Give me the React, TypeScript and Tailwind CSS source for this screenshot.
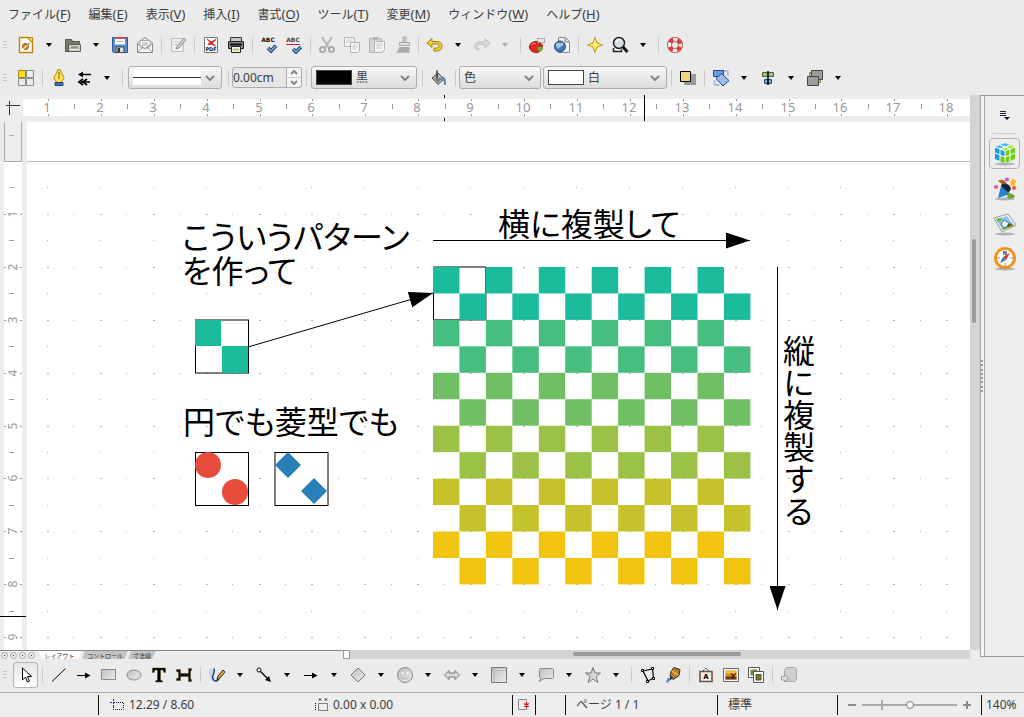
import { Fragment } from "react";
import type { ReactNode } from "react";

// one centimetre on the page at 140% zoom
const CM = 52.9;
const cm = (n: number) => Math.round(n * CM);

const range = (from: number, to: number) =>
  Array.from({ length: to - from + 1 }, (_, i) => from + i);

const menus = [
  ["ファイル", "F"],
  ["編集", "E"],
  ["表示", "V"],
  ["挿入", "I"],
  ["書式", "O"],
  ["ツール", "T"],
  ["変更", "M"],
  ["ウィンドウ", "W"],
  ["ヘルプ", "H"],
];

const bands = ["#1abc9c", "#45be80", "#70bf64", "#9bc147", "#c6c22b", "#f1c40f"];

const icons: Record<string, ReactNode> = {
  new: (
    <>
      <path d="M2.500 1.500h8l5 5v10h-13z" fill="#fffdf2" stroke="#b8860b" strokeWidth="1.400" />
      <path d="M10.500 1.500h5v5z" fill="#f3d36a" stroke="#b8860b" />
      <circle cx="8.500" cy="10.500" r="3" fill="#e07b28" stroke="#8a4a20" />
      <path d="m5.500 13.500 7-6" stroke="#fff3d0" strokeWidth="1.200" />
      <path d="m10 9.500 3-3" stroke="#555" />
    </>
  ),
  open: (
    <>
      <path d="M1.500 3.500h6l1 2h7v10h-14z" fill="#77796b" stroke="#55574d" />
      <path d="M4.500 8.500h12v7h-12z" fill="#c9cbc4" stroke="#5d5f56" />
      <path d="M7 11.500h7" stroke="#8a8c84" strokeWidth="2" />
      <path d="M7 13.500h7" stroke="#f2f2ef" />
    </>
  ),
  save: (
    <>
      <path d="M1.500 1.500h15v15h-14l-1-1z" fill="#5b8fd0" stroke="#2b5796" />
      <path d="M4 1.500h10v7H4z" fill="#fff" />
      <path d="M4 1h10v2H4z" fill="#d94a44" />
      <path d="M5.500 5.500h7" stroke="#bbb" />
      <path d="M5 11h8v5.500H5z" fill="#ddd" stroke="#444" />
      <path d="M6.500 12h2.500v4H6.500z" fill="#333" />
    </>
  ),
  mail: (
    <>
      <path d="M1.500 7 9 1.500 16.500 7v9.500h-15z" fill="#f5f5f5" stroke="#888" />
      <path d="M4 4.500h10v6L9 13 4 10.500z" fill="#fff" stroke="#aaa" />
      <path d="M2 16l5-5M16 16l-5-5M2 8l7 4.500L16 8M6 7h6M6 9h6" fill="none" stroke="#999" />
    </>
  ),
  edit: (
    <>
      <path d="M2.500 2.500h12v13h-12z" fill="#f0f0f0" stroke="#bbb" />
      <path d="M4.500 6h6M4.500 8.500h4" stroke="#ccc" />
      <path d="m7 13 1-3 7-8 2 2-7 8z" fill="#c9c9c9" stroke="#999" />
    </>
  ),
  pdf: (
    <>
      <path d="M2.500 1.500h13v15h-13z" fill="#fff" stroke="#777" />
      <path d="m5 3 4 3 5-2.500-4 3.500 3.500 3L9 8l-3 .500 2-2z" fill="#d9202a" stroke="#d9202a" />
      <text x="9" y="15" textAnchor="middle" fontSize="5" fontWeight="700" fill="#111">PDF</text>
    </>
  ),
  print: (
    <>
      <path d="M3.500 1.500h11v5h-11z" fill="#c8c8c8" stroke="#333" />
      <path d="M1.500 5.500h15v7h-15z" fill="#8a8a8a" stroke="#222" />
      <path d="M3 8.500h12" stroke="#111" strokeWidth="2" />
      <path d="M4.500 10.500h9v6h-9z" fill="#f4f4ee" stroke="#222" />
      <path d="M6 13.500h6" stroke="#a9c878" strokeWidth="2" />
    </>
  ),
  spell: (
    <>
      <text x="8" y="6" textAnchor="middle" fontSize="6" fontWeight="700" fill="#111">ABC</text>
      <path d="m8 12 3 3 5-5.500" fill="none" stroke="#1d4278" strokeWidth="3.500" />
      <path d="m8 12 3 3 5-5.500" fill="none" stroke="#7ea9de" strokeWidth="1.500" />
    </>
  ),
  autospell: (
    <>
      <text x="8" y="6" textAnchor="middle" fontSize="6" fontWeight="700" fill="#5a4040">ABC</text>
      <path d="m1 9 1-1 1 1 1-1 1 1 1-1 1 1 1-1 1 1 1-1 1 1 1-1 1 1 1-1 1 1" fill="none" stroke="#e02020" />
      <path d="m8 13 3 3 5-5" fill="none" stroke="#1d4278" strokeWidth="3.500" />
      <path d="m8 13 3 3 5-5" fill="none" stroke="#7ea9de" strokeWidth="1.500" />
    </>
  ),
  cut: (
    <>
      <path d="m4 1 7 11M14 1 7 12" stroke="#b5b5b5" strokeWidth="2" />
      <circle cx="4.500" cy="13.500" r="2.500" fill="none" stroke="#aaa" strokeWidth="2" />
      <circle cx="13.500" cy="13.500" r="2.500" fill="none" stroke="#aaa" strokeWidth="2" />
    </>
  ),
  copy: (
    <>
      <path d="M1.500 1.500h10v9h-10z" fill="#f3f3f3" stroke="#b5b5b5" />
      <path d="M3.500 4h6M3.500 6h6" stroke="#ccc" />
      <path d="M7.500 6.500h9v8l-2 2h-7z" fill="#f5f5f5" stroke="#b0b0b0" />
      <path d="M9.500 9h5M9.500 11h5M9.500 13h4" stroke="#ccc" />
    </>
  ),
  paste: (
    <>
      <path d="M1.500 2.500h12v14h-12z" fill="#d5d5d5" stroke="#b0b0b0" />
      <path d="M5 1h5v3H5z" fill="#b5b5b5" />
      <path d="M6.500 5.500h10v8l-2 3h-8z" fill="#f3f3f3" stroke="#b5b5b5" />
      <path d="M8.500 8h6M8.500 10h6M8.500 12h5" stroke="#ccc" />
    </>
  ),
  brush: (
    <>
      <path d="M10 1h3v5h-3z" fill="#ccc" stroke="#aaa" />
      <path d="M6.500 6.500h10v3h-10z" fill="#ddd" stroke="#aaa" />
      <path d="M6.500 11h10v5H4z" fill="#aaa" />
      <path d="M3 16.500h14" stroke="#bbb" />
    </>
  ),
  undo: (
    <path d="M1 7l5-4.500v3h5c3 0 5 1.500 5 4.500 0 3-2 5-5 5H8v-3h3c1 0 2-.5 2-2s-1-2-2-2H6v3.500z" fill="#f0cf3c" stroke="#a88400" />
  ),
  redo: (
    <path d="M17 7l-5-4v3H6C3.500 6 1.500 7.500 1.500 10s1.500 4 4 4v-1.500c-1 0-1.500-1-1.500-2s1-2 2-2h6V12z" fill="#ddd" stroke="#bbb" />
  ),
  chart: (
    <>
      <ellipse cx="8" cy="11" rx="6.500" ry="5.500" fill="#dd2a22" stroke="#a31712" />
      <path d="M9 11h6c0 3-2 4.500-4 5z" fill="#6fa833" />
      <path d="M4 9c1-2 3-2 4-1" stroke="#f79b92" fill="none" />
      <path d="M9.500 2.500h7v4h-7z" fill="#e8e8e8" stroke="#888" strokeDasharray="2 1" />
    </>
  ),
  globe: (
    <>
      <path d="M5.500 1.500h7l4 4v11h-11z" fill="#f5f5f5" stroke="#888" />
      <path d="M12 1.500V6h4.500" fill="#ddd" stroke="#888" />
      <circle cx="7" cy="10.500" r="5.500" fill="#4576b5" stroke="#274f8a" />
      <path d="M3 8c2-3 4 0 5-1s3 0 2 2-3 1-4 3-3-1-3-4z" fill="#a9c6ea" />
    </>
  ),
  navigator: (
    <path d="M9 1.500 11 7l5.500 2-5.500 2-2 5.500L7 11 1.500 9 7 7z" fill="#ffee7a" stroke="#c49a00" />
  ),
  zoom: (
    <>
      <path d="M2.500 12v3.500h8v-2" fill="#f4f4f4" stroke="#222" strokeWidth="1.500" />
      <circle cx="8" cy="7" r="5.500" fill="#d6dde0" stroke="#222" strokeWidth="1.500" />
      <path d="M5 6c1-2 3-3 5-2" stroke="#fff" strokeWidth="1.500" />
      <path d="m12 11 4.500 5" stroke="#111" strokeWidth="3" />
    </>
  ),
  help: (
    <>
      <circle cx="9" cy="9" r="5.500" fill="none" stroke="#a8453f" strokeWidth="5" />
      <circle cx="9" cy="9" r="5.500" fill="none" stroke="#f3eeee" strokeWidth="3.500" />
      <circle cx="9" cy="9" r="5.500" fill="none" stroke="#e23a35" strokeWidth="4" strokeDasharray="4.320 4.320" strokeDashoffset="-2" />
    </>
  ),
  styles: (
    <>
      <path d="M1.500 1.500h7v7h-7z" fill="#ffd91c" stroke="#9a8420" />
      <path d="M9.500 1.500h7v7h-7zM1.500 9.500h7v7h-7zM9.500 9.500h7v7h-7z" fill="#ececec" stroke="#8a8a8a" />
    </>
  ),
  pen: (
    <>
      <path d="M8 .5h2c1 4 4 6 4 9l-3 4H7l-3-4c0-3 3-5 4-9z" fill="#ffe14d" stroke="#a88400" />
      <path d="M9 3v7" stroke="#7a6000" />
      <path d="M5 13.500h8v3H5z" fill="#3e6db3" stroke="#24487e" />
    </>
  ),
  lineEnds: (
    <>
      <path d="M5 5.500h11M6 13h9" stroke="#000" strokeWidth="1.500" />
      <path d="m3 5.500 5-3v6z" fill="#000" />
      <path d="m8 10-4 3 4 3M12 10l-4 3 4 3" fill="none" stroke="#000" strokeWidth="1.700" />
    </>
  ),
  bucket: (
    <>
      <path d="m2 9 6-5 6 6-6 5.500z" fill="#b9b9b5" stroke="#4a4a46" />
      <path d="M7 1.500v8" stroke="#333" strokeWidth="1.500" />
      <path d="M4 9h8l-4 5z" fill="#7c7c78" />
      <path d="M11 8c4-1 5 1 5 8h-2c0-5-1-6-3-5z" fill="#6487b5" />
    </>
  ),
  shadow: (
    <>
      <path d="M5 5h12v11H5z" fill="#999" />
      <path d="M1.500 2.500h10v10h-10z" fill="#f3d67c" stroke="#000" />
    </>
  ),
  rotate: (
    <>
      <path d="M2.500 16v-5M2.500 16h5M16 2v5M16 2h-5" stroke="#9db8dc" strokeWidth="1.500" />
      <path d="M1.500 1.500h10v6h-10z" fill="#6f9bd6" stroke="#1f4b8e" />
      <path d="m4 9.500 5.500-5 7.500 7-6 5.500z" fill="#9dbde8" stroke="#1f4b8e" />
    </>
  ),
  align: (
    <>
      <path d="M3.500 3.500h11v4h-11z" fill="#9fc08b" stroke="#4a6d37" />
      <path d="M5.500 10.500h7v4h-7z" fill="#7ba0ce" stroke="#2c517f" />
      <path d="M9 2v14" stroke="#000" strokeWidth="1.500" />
    </>
  ),
  arrange: (
    <>
      <path d="M3.500 3.500h11v10h-11z" fill="#b5d780" stroke="#6b9336" />
      <path d="M5.500 1.500h11v9h-11z" fill="#9c9c9c" stroke="#444" />
      <path d="M1.500 7.500h11v9h-11z" fill="#9c9c9c" stroke="#444" />
    </>
  ),
  select: <path d="M5.500 2v12l3-3 2 5 2-1-2-4.500h4z" fill="#fff" stroke="#000" />,
  line: <path d="M2 15.500 15.500 2.500" stroke="#000" />,
  arrow: (
    <>
      <path d="M2 9.500h10" stroke="#000" />
      <path d="M10 6.500v6l5.500-3z" fill="#000" />
    </>
  ),
  rect: <path d="M1.500 3.500h14v10h-14z" fill="url(#metal)" stroke="#888" />,
  ellipse: <ellipse cx="9" cy="9" rx="7" ry="5" fill="url(#metal)" stroke="#888" />,
  text: <path d="M2.500 2h13v4.500H14L13 4h-2.500v10l2 1v1h-7v-1l2-1V4H5L4 6.500H2.500z" fill="#000" stroke="#5c481c" strokeWidth=".5" />,
  dimension: <path d="M1.500 3.500v2l2 .5v6l-2 .5v2h4V10.500h8v5h3v-2l-1-.5V5l1-.5v-2h-3v5h-8v-4z" fill="#111" stroke="#5c481c" strokeWidth=".5" />,
  curve: (
    <>
      <path d="M1.500 2.500C8 2 3 8 5 12l3 3C3 17 1 12 1.500 2.500z" fill="#bcd0ea" />
      <path d="M6 2.500C8 8 3 9 5 13s6 1 6-1" stroke="#1f3f6e" strokeWidth="1.500" />
      <path d="m9 14 1-4 5-6 2 2-5 6z" fill="#f0a92c" stroke="#222" />
    </>
  ),
  connector: (
    <>
      <circle cx="4" cy="4" r="2" fill="#fff" stroke="#000" />
      <path d="m5.500 5.500 7 7" stroke="#000" strokeWidth="1.200" />
      <path d="m10 14 6 2-2-6z" fill="#000" />
    </>
  ),
  diamond: <path d="m9 2 7 7-7 7-7-7z" fill="url(#metal)" stroke="#777" />,
  smiley: (
    <>
      <circle cx="9" cy="9" r="7.500" fill="url(#metal)" stroke="#888" />
      <path d="M6.500 6v2M11.500 6v2" stroke="#fff" strokeWidth="1.500" />
      <path d="M5 11c2 2.500 6 2.500 8 0" fill="none" stroke="#aaa" />
    </>
  ),
  doubleArrow: <path d="m1.500 9 4.500-4.500V7h6V4.500L16.500 9 12 13.500V11H6v2.500z" fill="#d9d9d9" stroke="#777" />,
  flowchart: (
    <>
      <path d="M1.500 1.500h15v15h-15z" fill="url(#metal)" stroke="#777" />
      <path d="M4.500 2v14M2 4.500h14" stroke="#bdbdbd" />
    </>
  ),
  callout: <path d="M3.500 2.500h12l1 1v8l-1 1h-8L2 15.500l2-3-1.500-1v-8z" fill="url(#metal)" stroke="#888" />,
  star: <path d="m9 1.500 2 5.500h5.500L12 10.500l2 6L9 13l-5 3.500 2-6L1.500 7H7z" fill="url(#metal)" stroke="#777" />,
  points: (
    <>
      <path d="M4 5 13.500 3 14.500 12 9 15z" fill="none" stroke="#000" strokeWidth="1.200" />
      <path d="M2.500 3.500h2v2h-2zM12.500 1.500h2v2h-2zM13.500 11.500h2v2h-2zM7.500 14.500h2v2h-2z" fill="#fff" stroke="#000" />
    </>
  ),
  glue: (
    <>
      <path d="m10 1.500 6 2-1 6-6 4-3-3 1-5z" fill="#b07a3a" stroke="#3a2814" />
      <path d="m8 5 6 4" stroke="#e8b53a" strokeWidth="2" />
      <path d="m7 10 2 2-4 3z" fill="#222" />
      <path d="m5 12-2 4.500" stroke="#5580b8" strokeWidth="2" />
    </>
  ),
  fontwork: (
    <>
      <path d="m6 5 3-3 3 3" fill="none" stroke="#111" strokeDasharray="1.500 1" />
      <path d="M3 5.500h12v10H3z" fill="#f5efe8" stroke="#6b5343" strokeWidth="1.600" />
      <text x="9" y="13" textAnchor="middle" fontSize="7" fontWeight="700" fill="#000">A</text>
    </>
  ),
  picture: (
    <>
      <path d="M1.500 2.500h15v13h-15z" fill="#fff" stroke="#666" />
      <path d="M3.500 4.500h11v9h-11z" fill="#d58722" />
      <path d="M3.500 4.500h11v3h-11z" fill="#f0bd4a" />
      <path d="M3.500 10.500h11v3h-11z" fill="#6b3a12" />
      <path d="M11 13V8m0 3 3-4m-3 3L9 7" stroke="#2d1a0a" />
    </>
  ),
  gallery: (
    <>
      <path d="M1.500 1.500h11v10h-11z" fill="#fff" stroke="#555" />
      <path d="M3.500 3.500h7v6h-7z" fill="#6d8e3e" />
      <path d="M6.500 5.500h10v11h-10z" fill="#fff" stroke="#555" />
      <path d="M9 8.500h5V14H9z" fill="#8b6a2c" stroke="#37592b" />
    </>
  ),
  extrude: (
    <>
      <path d="M5.500 2.500 7 1.500h8l1.500 1.500v10L15 15.500H4.500v-11z" fill="#cfcfcf" stroke="#aaa" />
      <path d="M1.500 10.500h3v-2l4 3.500-4 4v-2h-3z" fill="#e2e2e2" stroke="#999" />
    </>
  ),
};

function Icon({ name }: { name: string }) {
  return (
    <svg viewBox="0 0 18 18" className="h-[18px] w-[18px] font-['DejaVu_Sans']" fill="none">
      {icons[name]}
    </svg>
  );
}

function Tool({ name, menu = false, active = false, off = false }: { name: string; menu?: boolean; active?: boolean; off?: boolean }) {
  return (
    <>
      <button
        aria-label={name}
        disabled={off}
        className={
          active
            ? "flex h-[26px] w-[25px] shrink-0 items-center justify-center rounded-[3px] border border-[#b4b4b4] bg-linear-to-b from-[#e4e4e4] to-white"
            : "flex h-[26px] w-[25px] shrink-0 items-center justify-center"
        }
      >
        <Icon name={name} />
      </button>
      {menu && (
        <button aria-label={`${name} menu`} disabled={off} className="flex h-[26px] w-[22px] shrink-0 items-center justify-center">
          <svg viewBox="0 0 6 4" className="h-1 w-1.5">
            <path d="M0 0h6L3 4z" fill={off ? "#aaa" : "#000"} />
          </svg>
        </button>
      )}
    </>
  );
}

function Sep() {
  return (
    <div className="flex w-2 shrink-0 justify-center">
      <div className="h-4 w-px bg-[#cacaca]" />
    </div>
  );
}

function Grip() {
  return (
    <div className="flex w-[13px] shrink-0 flex-col gap-0.5 pl-[3px]">
      <div className="h-px w-1 bg-[#c4c4c4]" />
      <div className="h-px w-1 bg-[#c4c4c4]" />
      <div className="h-px w-1 bg-[#c4c4c4]" />
    </div>
  );
}

function Combo({ label, value, width, swatch }: { label: string; value: string; width: string; swatch?: ReactNode }) {
  return (
    <label className={`flex h-[23px] shrink-0 items-center rounded-[3px] border border-[#adadad] bg-linear-to-b from-[#f7f7f7] to-[#dcdcdc] pr-1.5 pl-1 ${width}`}>
      {swatch}
      <select aria-label={label} className="min-w-0 flex-1 appearance-none outline-none">
        <option>{value}</option>
      </select>
      <svg viewBox="0 0 10 6" className="h-1.5 w-2.5 shrink-0">
        <path d="m1 1 4 4 4-4" fill="none" stroke="#858585" strokeWidth="2" />
      </svg>
    </label>
  );
}

function HorizontalRuler() {
  return (
    <svg className="h-[27px] w-full font-['Noto_Sans'] text-[13px]" shapeRendering="crispEdges">
      <rect x="23" y="4" width="100%" height="17" fill="#fff" />
      {range(1, 18).map((n) => (
        <g key={n} stroke="#999">
          <path d={`M${cm(n) - 5} 4v2M${cm(n) - 5} 19v2M${cm(n + 0.5) - 5} 9v5`} />
          <text x={cm(n) - 6} y="17" textAnchor="middle" fill="#999" stroke="none">{n}</text>
        </g>
      ))}
      <path d="M9.500 6v14M6 10.500h14" stroke="#333" />
      <path d="M444.500 0v3M444.500 23v3M644.500 0v26" stroke="#000" />
    </svg>
  );
}

function VerticalRuler() {
  return (
    <svg className="w-[27px] shrink-0 self-stretch font-['Noto_Sans'] text-[12px]" shapeRendering="crispEdges">
      <rect x="4" y="40" width="18" height="100%" fill="#fff" />
      <path d="M4.500 0v39.500h17V0M9 13.500h5M9 65.500h5" fill="none" stroke="#aaa" />
      {range(1, 9).map((n) => (
        <g key={n} stroke="#999">
          <path d={`M4 ${cm(n) + 39}h2M20 ${cm(n) + 39}h2M9 ${cm(n + 0.5) + 39}h5`} />
          <text transform={`translate(17 ${cm(n) + 39}) rotate(-90)`} textAnchor="middle" fill="#999" stroke="none">{n}</text>
        </g>
      ))}
      <path d="M0 494.500h26" stroke="#000" />
    </svg>
  );
}

function Drawing() {
  const half = CM / 2;
  return (
    <svg className="min-w-0 flex-1 self-stretch bg-white font-['Noto_Sans_CJK_JP',sans-serif] text-[32px] [font-feature-settings:'palt']">
      <defs>
        <marker id="head" viewBox="0 0 24 16" refX="24" refY="8" markerWidth="24" markerHeight="16" markerUnits="userSpaceOnUse" orient="auto">
          <path d="M0 0 24 8 0 16z" />
        </marker>
      </defs>
      <path d="M0 39.500h4000" stroke="#bbb" />
      <g transform="translate(-32 39)">
        {/* snap grid */}
        <g stroke="#b5b5b5" shapeRendering="crispEdges" transform="translate(-1 0)">
          {range(1, 40).map((r) => (
            <Fragment key={r}>
              <path d={range(1, 40).map((c) => `M${cm(c)} ${cm(r - 0.5)}h1`).join("")} />
              <path d={range(1, 40).map((c) => `M${cm(c)} ${cm(r)}h2M${cm(c + 0.5)} ${cm(r)}h1`).join("")} />
            </Fragment>
          ))}
        </g>

        {/* 12 x 12 checkerboard, two rows for every colour */}
        <g transform="translate(438 106)">
          <path d={`M.5 0v${CM}H${CM}V0H.5z`} fill="#fff" stroke="#000" />
          {range(0, 11).map((row) =>
            range(0, 5).map((col) => (
              <rect
                key={`${row}-${col}`}
                x={(col * 2 + (row % 2)) * half}
                y={row * half}
                width={half}
                height={half}
                fill={bands[Math.floor(row / 2)]}
              />
            ))
          )}
        </g>

        <g stroke="#000" fill="#fff">
          <rect x="200.500" y="159" width="53" height="53" />
          <rect x="200.500" y="291.500" width="53" height="53" />
          <rect x="280" y="291.500" width="53" height="53" />
        </g>
        <path d="M200 159h26v26h-26zM227 185h26v27h-26z" fill="#1abc9c" />
        <g fill="#e74c3c">
          <circle cx="213" cy="304" r="13" />
          <circle cx="240" cy="331" r="13" />
        </g>
        <path d="m293 291 13 13-13 13-13-13zM319 317l13 13-13 13-13-13z" fill="#2980b9" />

        <g stroke="#000">
          <path d="M438 79.500h317" markerEnd="url(#head)" />
          <path d="M253 186 438 132" markerEnd="url(#head)" />
          <path d="M782.500 106v343" markerEnd="url(#head)" />
        </g>

        <text x="187" y="88">こういうパターン</text>
        <text x="187" y="122">を作って</text>
        <text x="188" y="273">円でも菱型でも</text>
        <text x="503" y="75">横に複製して</text>
        <text x="804" y="174" className="[font-feature-settings:normal] [writing-mode:vertical-rl]">縦に複製する</text>
      </g>
    </svg>
  );
}

const decks: { name: string; art: ReactNode }[] = [
  {
    name: "プロパティ",
    art: (
      <>
        <path d="m2 5 10 4v12L2 17z" fill="#159be8" />
        <path d="M12 9l10-4v12l-10 4z" fill="#6fce12" />
        <path d="m2 5 10-4 5 2-10 4z" fill="#49b8f2" />
        <path d="m7 7 10-4 5 2-10 4z" fill="#a2ec3c" />
        <path d="m7 13 5 2v6l-5-2z" fill="#6fce12" />
        <path d="m2 5 10 4 10-4M12 9v12M7 3l10 4v12M17 3 7 7v12M2 11l10 4 10-4" fill="none" stroke="#fff" />
      </>
    ),
  },
  {
    name: "スタイル",
    art: (
      <>
        <path d="M5 4c5-3 8 0 9 4l3 6-7-4-2-4z" fill="#b45a1a" />
        <path d="M8 8c6-3 9 0 10 4l-4 6-5-4z" fill="#16273d" />
        <path d="m8 9 9 8-12 4z" fill="#2a82c9" />
        <path d="M16 14c-1 3 5 2 6 6-4 2-7 2-8 0z" fill="#6ba32c" />
        <circle cx="14" cy="2.500" r="2" fill="#c64fd4" />
        <circle cx="3" cy="10" r="2" fill="#e4549a" />
        <circle cx="21" cy="11" r="2" fill="#ef4d55" />
        <path d="m20 0 1 3 3 1-2 2v3l-2-1-3 1 1-3-2-2h3z" fill="#f7b916" />
      </>
    ),
  },
  {
    name: "ギャラリー",
    art: (
      <>
        <path d="m1 6 14-4 8 11-14 7z" fill="#f4f4f4" stroke="#999" />
        <path d="m3 7 11-3 6 8-11 5z" fill="#8fcaf0" />
        <path d="m3 7 5-1 1 2-4 2zM8 17l12-5 1 2-11 4z" fill="#5bbf21" />
        <path d="m8 12 3-4 5 3-1 3-4 2z" fill="#fff" stroke="#2c6aa5" />
        <path d="m14 13 4-2 1 2-4 2z" fill="#7e3a12" />
      </>
    ),
  },
  {
    name: "ナビゲーター",
    art: (
      <>
        <circle cx="12" cy="11" r="9.500" fill="#fff" stroke="#f0941e" strokeWidth="3" />
        <path d="M12 4v2M12 16v3M4 11h3M17 11h3" stroke="#999" />
        <path d="m17 6-4 7-3-3z" fill="#d8322a" />
        <path d="m7 16 3-6 3 3z" fill="#2f74cc" />
        <text x="12" y="8" textAnchor="middle" fontSize="6" fontWeight="700" fill="#333">N</text>
      </>
    ),
  },
];

function Sidebar() {
  return (
    <aside className="mb-0.5 flex shrink-0 border-y border-[#999]">
      <div className="flex w-[5px] items-center border-x border-[#a5a5a5] bg-[#f4f4f4]">
        <div className="flex h-8 w-0.5 flex-col justify-between">
          {range(0, 7).map((n) => (
            <div key={n} className="h-0.5 w-0.5 bg-[#999]" />
          ))}
        </div>
      </div>
      <div className="flex w-[39px] flex-col items-center gap-1 bg-[#ededed] pt-[7px]">
        <button aria-label="設定" className="flex h-6 w-6 items-center justify-center">
          <svg viewBox="0 0 12 12" className="h-3 w-3">
            <path d="M1 2.500h6M1 4.500h6M1 6.500h6" stroke="#223" />
            <path d="M5 8h6l-3 3z" fill="#111a33" />
          </svg>
        </button>
        <hr className="mt-0.5 w-6 border-[#ccc]" />
        {decks.map((deck, i) => (
          <button
            key={deck.name}
            aria-label={deck.name}
            className={
              i === 0
                ? "flex h-[31px] w-[31px] items-center justify-center rounded-[4px] border border-[#b2b2b2]"
                : "flex h-[31px] w-[31px] items-center justify-center"
            }
          >
            <svg viewBox="0 0 24 24" className="h-6 w-6 shrink-0 font-['Liberation_Sans']">
              <ellipse cx="12" cy="22" rx="10" ry="1.500" fill="#000" opacity=".25" />
              {deck.art}
            </svg>
          </button>
        ))}
      </div>
    </aside>
  );
}

function LayerTabs() {
  return (
    <div className="flex h-[9px] font-['Noto_Sans_CJK_JP',sans-serif] text-[6px] leading-[7px] text-[#333]">
      <div className="flex w-[343px] shrink-0 border-t border-[#888] bg-[#ededed]">
        <div className="flex w-[37px] shrink-0 items-center gap-0.5 pl-px">
          {["先頭", "前", "次", "末尾"].map((name) => (
            <button key={name} aria-label={name} className="flex h-[7px] w-[7px] items-center justify-center rounded-full border border-[#aaa]">
              <span className="h-px w-px bg-[#333]" />
            </button>
          ))}
        </div>
        <button className="w-[45px] bg-white [clip-path:polygon(0_0,100%_0,92%_100%,14%_100%)]">レイアウト</button>
        <button className="w-[46px] bg-[#c4c4c4] [clip-path:polygon(6%_0,100%_0,92%_100%,0_100%)]">コントロール</button>
        <button className="w-[28px] bg-[#c4c4c4] [clip-path:polygon(12%_0,100%_0,86%_100%,0_100%)]">寸法線</button>
      </div>
      <div className="w-[7px] shrink-0 border border-[#999] bg-white" />
      <div className="flex-1 bg-[#d4d4d4] pt-0.5">
        <div className="mr-[37%] ml-auto h-1 w-[27%] rounded-full bg-[#9b9b9b]" />
      </div>
    </div>
  );
}

export default function App() {
  return (
    <div className="flex min-h-screen flex-col overflow-hidden bg-[#ebebeb] font-['Noto_Sans','Noto_Sans_CJK_JP',sans-serif] text-[12px] text-[#3c3c3c]">
      <svg className="absolute h-0 w-0">
        <defs>
          <linearGradient id="metal" x1="0" y1="0" x2="1" y2="1">
            <stop offset="0" stopColor="#bdbdbd" />
            <stop offset="1" stopColor="#ededed" />
          </linearGradient>
        </defs>
      </svg>

      <nav className="flex h-[29px] shrink-0 items-center gap-[18px] pl-2 leading-4">
        {menus.map(([name, key]) => (
          <button key={key} className="whitespace-nowrap">
            {name}
            <span className="text-[13px]">
              (<span className="underline underline-offset-2">{key}</span>)
            </span>
          </button>
        ))}
      </nav>

      {/* standard toolbar */}
      <div className="flex h-[31px] shrink-0 items-center">
        <Grip />
        <Tool name="new" menu />
        <Tool name="open" menu />
        <Tool name="save" />
        <Tool name="mail" />
        <Sep />
        <Tool name="edit" off />
        <Sep />
        <Tool name="pdf" />
        <Tool name="print" />
        <Sep />
        <Tool name="spell" />
        <Tool name="autospell" />
        <Sep />
        <Tool name="cut" off />
        <Tool name="copy" off />
        <Tool name="paste" off />
        <Tool name="brush" off />
        <Sep />
        <Tool name="undo" menu />
        <Tool name="redo" menu off />
        <Sep />
        <Tool name="chart" />
        <Tool name="globe" />
        <Sep />
        <Tool name="navigator" />
        <Tool name="zoom" menu />
        <Sep />
        <Tool name="help" />
      </div>

      {/* line and filling toolbar */}
      <div className="flex h-[35px] shrink-0 items-center">
        <Grip />
        <Tool name="styles" />
        <Sep />
        <Tool name="pen" />
        <Tool name="lineEnds" menu />
        <Sep />
        <div className="flex items-center px-0.5">
          <Combo
            label="線のスタイル"
            value=""
            width="w-[94px]"
            swatch={
              <span className="flex h-[15px] w-[68px] shrink-0 items-center bg-white">
                <span className="h-px w-full bg-[#333]" />
              </span>
            }
          />
        </div>
        <Sep />
        <div className="flex h-[21px] w-[70px] shrink-0 items-stretch">
          <input
            aria-label="線の幅"
            defaultValue="0.00cm"
            className="w-[55px] rounded-l-[3px] border border-[#adadad] bg-[#e6e6e6] outline-none"
          />
          <div className="flex flex-1 flex-col rounded-r-[3px] border border-l-0 border-[#adadad] bg-[#f5f5f5]">
            <button aria-label="増やす" className="flex flex-1 items-center justify-center border-b border-[#ccc]">
              <svg viewBox="0 0 8 5" className="h-[5px] w-2"><path d="m1 4 3-3 3 3" fill="none" stroke="#858585" strokeWidth="2" /></svg>
            </button>
            <button aria-label="減らす" className="flex flex-1 items-center justify-center">
              <svg viewBox="0 0 8 5" className="h-[5px] w-2"><path d="m1 1 3 3 3-3" fill="none" stroke="#858585" strokeWidth="2" /></svg>
            </button>
          </div>
        </div>
        <Sep />
        <div className="flex items-center px-px">
          <Combo label="線の色" value="黒" width="w-[106px]" swatch={<span className="mr-1 h-[15px] w-9 shrink-0 border border-[#444] bg-black" />} />
        </div>
        <Sep />
        <Tool name="bucket" />
        <Sep />
        <div className="flex items-center gap-0.5">
          <Combo label="領域の種類" value="色" width="w-[82px]" />
          <Combo label="領域の色" value="白" width="w-[124px]" swatch={<span className="mr-1 h-[15px] w-9 shrink-0 border border-[#444] bg-white" />} />
        </div>
        <Sep />
        <Tool name="shadow" />
        <Sep />
        <Tool name="rotate" menu />
        <Tool name="align" menu />
        <Tool name="arrange" menu />
      </div>

      <main className="flex flex-1">
        <div className="flex min-w-0 flex-1 flex-col bg-[#ededed]">
          <HorizontalRuler />
          <div className="flex flex-1">
            <VerticalRuler />
            <Drawing />
          </div>
          <LayerTabs />
        </div>
        <div className="mb-[9px] flex w-2.5 shrink-0 flex-col items-start bg-[#d4d4d4] pl-0.5">
          <div className="basis-[26%]" />
          <div className="w-1 basis-[15%] rounded-full bg-[#9b9b9b]" />
        </div>
        <Sidebar />
      </main>

      {/* drawing toolbar */}
      <div className="flex h-[33px] shrink-0 items-center pb-0.5">
        <Grip />
        <Tool name="select" active />
        <Sep />
        <Tool name="line" />
        <Tool name="arrow" />
        <Tool name="rect" />
        <Tool name="ellipse" />
        <Tool name="text" />
        <Tool name="dimension" />
        <Sep />
        <Tool name="curve" menu />
        <Tool name="connector" menu />
        <Tool name="arrow" menu />
        <Tool name="diamond" menu />
        <Tool name="smiley" menu />
        <Tool name="doubleArrow" menu />
        <Tool name="flowchart" menu />
        <Tool name="callout" menu />
        <Tool name="star" menu />
        <Sep />
        <Tool name="points" />
        <Tool name="glue" />
        <Sep />
        <Tool name="fontwork" />
        <Tool name="picture" />
        <Tool name="gallery" />
        <Sep />
        <Tool name="extrude" off />
      </div>

      <footer className="flex h-[25px] shrink-0 items-stretch divide-x divide-[#111] border-t border-[#aaa] bg-[#ededed] py-0.5 leading-5">
        <div className="w-[99px] shrink-0" />
        <div className="flex flex-1 items-center">
          <span className="flex w-[204px] items-center gap-1 pl-2.5">
            <svg viewBox="0 0 16 14" className="h-3.5 w-4" fill="none">
              <path d="M1 4.500h6M4.500 1v8" stroke="#2222bb" strokeDasharray="2 1" />
              <path d="M7 4.500h7.500v7h-10V9" stroke="#111" strokeDasharray="1 1" />
            </svg>
            12.29 / 8.60
          </span>
          <span className="flex items-center gap-1 pl-2.5">
            <svg viewBox="0 0 16 14" className="h-3.5 w-4" fill="none" stroke="#111">
              <path d="M5.500 5.500h9v7h-9zM2.500 5v8" strokeDasharray="1 1" />
              <path d="m6 .500 2 2m0-2-2 2m6-2 2 2m0-2-2 2" />
            </svg>
            0.00 x 0.00
          </span>
        </div>
        <div className="flex w-[23px] shrink-0 items-center justify-center">
          <svg viewBox="0 0 12 12" className="h-3 w-3">
            <path d="M8.500 2V.500h-8v10h8V9" fill="none" stroke="#888" />
            <path d="M8.500 3v6M6 4.500l5 3M11 4.500l-5 3" stroke="#c4141c" strokeWidth="1.200" />
          </svg>
        </div>
        <div className="w-[30px] shrink-0" />
        <div className="w-[152px] shrink-0 pl-2.5">ページ 1 / 1</div>
        <div className="w-[120px] shrink-0 pl-2.5">標準</div>
        <div className="flex w-[144px] shrink-0 items-center gap-1 px-2">
          <button aria-label="縮小" className="flex h-4 w-3 items-center justify-center">
            <span className="h-0.5 w-2 bg-[#8a8a8a]" />
          </button>
          <span className="relative flex flex-1 items-center">
            <span className="absolute left-[20%] h-2.5 w-0.5 bg-[#aaa]" />
            <input
              type="range"
              aria-label="ズーム"
              defaultValue="50"
              className="relative h-0.5 w-full appearance-none bg-[#aaa] [&::-webkit-slider-thumb]:h-2 [&::-webkit-slider-thumb]:w-2 [&::-webkit-slider-thumb]:appearance-none [&::-webkit-slider-thumb]:rounded-full [&::-webkit-slider-thumb]:border [&::-webkit-slider-thumb]:border-[#777] [&::-webkit-slider-thumb]:bg-white"
            />
          </span>
          <button aria-label="拡大" className="flex h-4 w-3 items-center justify-center">
            <svg viewBox="0 0 8 8" className="h-2 w-2"><path d="M0 4h8M4 0v8" stroke="#8a8a8a" strokeWidth="2" /></svg>
          </button>
        </div>
        <div className="w-[42px] shrink-0 pl-1">140%</div>
      </footer>
    </div>
  );
}
